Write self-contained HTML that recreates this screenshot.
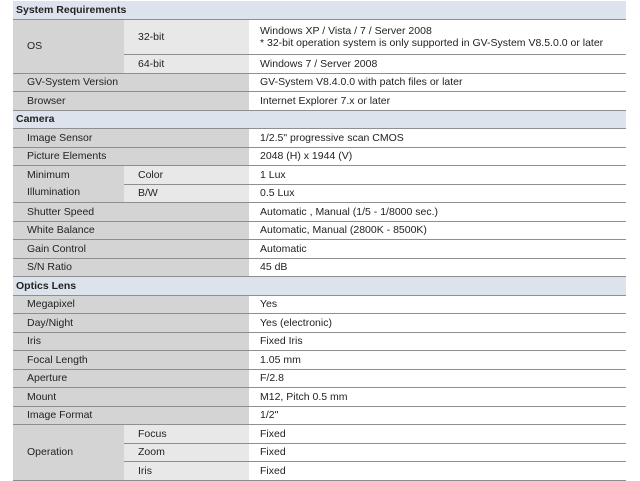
<!DOCTYPE html>
<html><head><style>
body{margin:0;width:640px;height:480px;background:#fff;font-family:"Liberation Sans",sans-serif;font-size:10.5px;color:#222;overflow:hidden;position:relative}
table{position:absolute;left:13px;top:1px;width:613px;border-collapse:collapse;table-layout:fixed}
td{padding:0 0 0 14px;border-bottom:1.5px solid #8f8f8f;vertical-align:middle;white-space:nowrap;line-height:12px}
td.h{background:#dde3ec;font-weight:bold;padding-left:3px;border-bottom:1.5px solid #8f8f8f}
td.a{background:#d4d4d4}
td.b{background:#e8e8e8}
td.c{background:#fff;padding-left:11px}
tr{height:18.5px}
</style></head><body>
<table>
<col style="width:111px"><col style="width:125px"><col style="width:377px">
<tr><td class="h" colspan="3">System Requirements</td></tr>
<tr style="height:35px"><td class="a" rowspan="2">OS</td><td class="b">32-bit</td><td class="c">Windows XP / Vista / 7 / Server 2008<br>* 32-bit operation system is only supported in GV-System V8.5.0.0 or later</td></tr>
<tr><td class="b">64-bit</td><td class="c">Windows 7 / Server 2008</td></tr>
<tr><td class="a" colspan="2">GV-System Version</td><td class="c">GV-System V8.4.0.0 with patch files or later</td></tr>
<tr><td class="a" colspan="2">Browser</td><td class="c">Internet Explorer 7.x or later</td></tr>
<tr><td class="h" colspan="3">Camera</td></tr>
<tr><td class="a" colspan="2">Image Sensor</td><td class="c">1/2.5" progressive scan CMOS</td></tr>
<tr><td class="a" colspan="2">Picture Elements</td><td class="c">2048 (H) x 1944 (V)</td></tr>
<tr><td class="a" rowspan="2" style="line-height:17px">Minimum<br>Illumination</td><td class="b">Color</td><td class="c">1 Lux</td></tr>
<tr><td class="b">B/W</td><td class="c">0.5 Lux</td></tr>
<tr><td class="a" colspan="2">Shutter Speed</td><td class="c">Automatic , Manual (1/5 - 1/8000 sec.)</td></tr>
<tr><td class="a" colspan="2">White Balance</td><td class="c">Automatic, Manual (2800K - 8500K)</td></tr>
<tr><td class="a" colspan="2">Gain Control</td><td class="c">Automatic</td></tr>
<tr><td class="a" colspan="2">S/N Ratio</td><td class="c">45 dB</td></tr>
<tr><td class="h" colspan="3">Optics Lens</td></tr>
<tr><td class="a" colspan="2">Megapixel</td><td class="c">Yes</td></tr>
<tr><td class="a" colspan="2">Day/Night</td><td class="c">Yes (electronic)</td></tr>
<tr><td class="a" colspan="2">Iris</td><td class="c">Fixed Iris</td></tr>
<tr><td class="a" colspan="2">Focal Length</td><td class="c">1.05 mm</td></tr>
<tr><td class="a" colspan="2">Aperture</td><td class="c">F/2.8</td></tr>
<tr><td class="a" colspan="2">Mount</td><td class="c">M12, Pitch 0.5 mm</td></tr>
<tr><td class="a" colspan="2">Image Format</td><td class="c">1/2"</td></tr>
<tr><td class="a" rowspan="3">Operation</td><td class="b">Focus</td><td class="c">Fixed</td></tr>
<tr><td class="b">Zoom</td><td class="c">Fixed</td></tr>
<tr><td class="b">Iris</td><td class="c">Fixed</td></tr>
</table>
</body></html>
